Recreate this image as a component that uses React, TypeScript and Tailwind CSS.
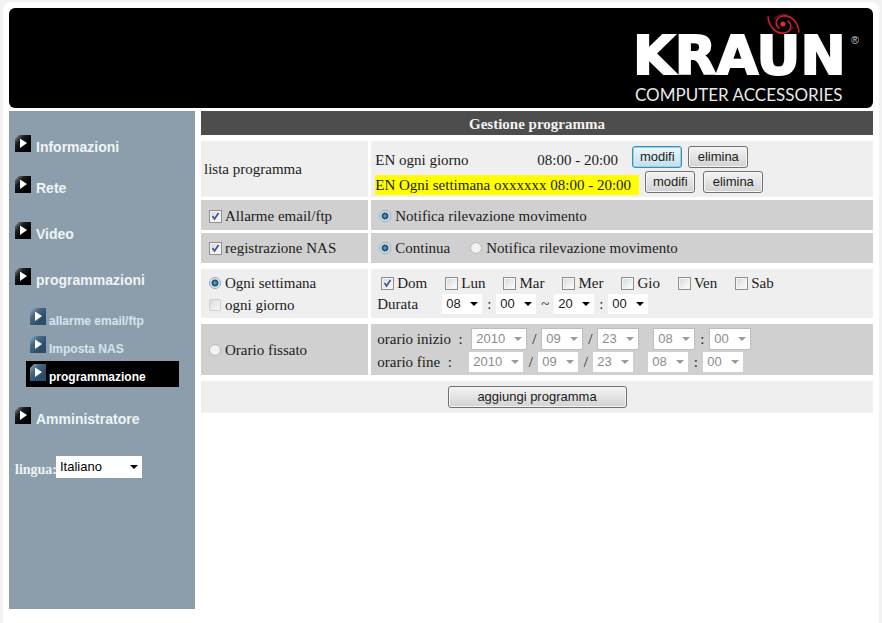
import { useState } from "react"
import type { ReactNode } from "react"
import clsx from "clsx"


const hours = Array.from({ length: 24 }, (_, i) => String(i).padStart(2, "0"))
const minutes = ["00", "10", "20", "30", "40", "50"]
const months = Array.from({ length: 12 }, (_, i) => String(i + 1).padStart(2, "0"))
const monthDays = Array.from({ length: 31 }, (_, i) => String(i + 1).padStart(2, "0"))
const years = ["2010", "2011", "2012"]
const weekDays = ["Dom", "Lun", "Mar", "Mer", "Gio", "Ven", "Sab"]

const ArrowIcon = ({ sub = false }: { sub?: boolean }) => (
    <svg viewBox="0 0 16 17" className="h-[17px] w-4 shrink-0" aria-hidden="true">
        <defs>
            <linearGradient id={sub ? "arrow-sub" : "arrow-main"} x1="0" y1="0" x2="0.7" y2="0.7">
                <stop offset="0" stopColor={sub ? "#9db2c2" : "#8d9aa5"} />
                <stop offset="0.45" stopColor={sub ? "#4a6a85" : "#1c1c1c"} />
                <stop offset="1" stopColor={sub ? "#2b4d6b" : "#000"} />
            </linearGradient>
        </defs>
        <path d="M4 0H16V17H0V4Z" fill={sub ? "url(#arrow-sub)" : "url(#arrow-main)"} />
        <path d="M5 3.5L12 8L5 13Z" fill="#fff" />
    </svg>
)

const Logo = () => (
    <svg viewBox="0 0 236 96" className="h-24 w-[236px] overflow-visible" role="img" aria-label="Kraun Computer Accessories">
        <text x="2" y="66" fill="#fff" stroke="#fff" strokeWidth="2" fontFamily="DejaVu Sans" fontWeight="700" fontSize="54">KRAUN</text>
        <text x="4" y="93" fill="#e8e8e8" fontFamily="Lato" fontSize="17">COMPUTER ACCESSORIES</text>
        <text x="220" y="36" fill="#ccc" fontFamily="Liberation Sans" fontSize="11">®</text>
        <g fill="none" stroke="#c8202c" strokeLinecap="round">
            <path d="M137 9C138 19 145 26 153 25C160 24 162 17 157 13" strokeWidth="1.6" />
            <path d="M168 24C167 14 160 7 152 8C145 9 143 16 148 20" strokeWidth="1.6" />
            <path d="M143 11C146 8 150 6 156 7" strokeWidth="0.8" />
            <path d="M162 19C161 22 157 25 151 25" strokeWidth="0.8" />
        </g>
        <circle cx="152" cy="16" r="2.5" fill="#e02a38" />
    </svg>
)

interface DropProps {
    label: string
    options: string[]
    value: string
    disabled?: boolean
    bordered?: boolean
    className?: string
}

const Drop = ({ label, options, value, disabled, bordered, className = "h-5 w-10" }: DropProps) => (
    <span className={clsx("relative inline-flex items-center", bordered && "border border-[#bdbdbd]")}>
        <select
            aria-label={label}
            defaultValue={value}
            disabled={disabled}
            className={clsx(
                "appearance-none bg-white pl-1 font-['Liberation_Sans',sans-serif] text-[13px] leading-5 disabled:text-[#8c8c8c] disabled:opacity-100",
                className,
            )}
        >
            {options.map((o) => <option key={o}>{o}</option>)}
        </select>
        <svg
            viewBox="0 0 8 4"
            className={clsx("pointer-events-none absolute right-1 h-1 w-2", disabled ? "fill-[#999]" : "fill-black")}
            aria-hidden="true"
        >
            <path d="M0 0H8L4 4Z" />
        </svg>
    </span>
)

interface TickProps {
    children: ReactNode
    defaultChecked?: boolean
    name?: string
}

const Check = ({ children, defaultChecked }: TickProps) => (
    <label className="flex w-fit items-center gap-[3px]">
        <span className="relative flex">
            <input
                type="checkbox"
                defaultChecked={defaultChecked}
                className="peer size-[13px] appearance-none border border-[#8e8f8f] bg-linear-to-br from-[#d5d8dc] to-white shadow-[inset_0_0_0_1px_#f4f4f4]"
            />
            <svg viewBox="0 0 13 13" className="pointer-events-none absolute inset-0 hidden size-[13px] peer-checked:block" aria-hidden="true">
                <path d="M3.5 6L5.5 9L9.5 3" fill="none" stroke="#4a5690" strokeWidth="1.8" />
            </svg>
        </span>
        {children}
    </label>
)

const Radio = ({ children, defaultChecked, name, square }: TickProps & { square?: boolean }) => (
    <label className="flex w-fit items-center gap-1">
        <input
            type="radio"
            name={name}
            defaultChecked={defaultChecked}
            className={clsx(
                "size-3 appearance-none border bg-[#f2f2f2] checked:border-[#8fa9b8] checked:bg-[radial-gradient(circle,#5fb4d8_0,#1c4a6b_3px,#dcecf4_4px)]",
                square ? "rounded-xs border-[#cfcfcf] bg-linear-to-br from-[#dcdcdc] to-[#f8f8f8]" : "rounded-full border-[#b4b8bb]",
            )}
        />
        {children}
    </label>
)

const Button = ({ children, active, className }: { children: ReactNode, active?: boolean, className?: string }) => (
    <button
        type="button"
        className={clsx(
            "h-[22px] rounded-[3px] border bg-linear-to-b font-['Liberation_Sans',sans-serif] text-[13px] leading-4",
            active
                ? "border-[#3c8fb0] from-[#eef6fa] to-[#c3dfec] shadow-[inset_0_0_0_1px_#8fd3ec]"
                : "border-[#707070] from-[#f4f4f4] to-[#d2d2d2] shadow-[inset_0_0_0_1px_#f6f6f6]",
            className,
        )}
    >
        {children}
    </button>
)

const Row = ({ left, children, dark, className }: { left: ReactNode, children: ReactNode, dark?: boolean, className?: string }) => (
    <div className={clsx("grid grid-cols-[1fr_3fr] gap-[3px]", className)}>
        <div className={clsx("flex flex-col justify-center", dark ? "bg-[#d0d0d0]" : "bg-[#efefef]")}>{left}</div>
        <div className={clsx("flex flex-col justify-center", dark ? "bg-[#d0d0d0]" : "bg-[#efefef]")}>{children}</div>
    </div>
)

const FixedTime = ({ label, bordered }: { label: string, bordered?: boolean }) => {

    const sep = clsx("text-center", bordered ? "w-3.5" : "w-[15px]")

    return (
        <div className="flex items-center">
            <span className={bordered ? "w-[94px]" : "w-[92px]"}>{label} &nbsp;:</span>
            <Drop label={`${label} anno`} options={years} value="2010" disabled bordered={bordered} className="h-5 w-[54px]" />
            <span className={sep}>/</span>
            <Drop label={`${label} mese`} options={months} value="09" disabled bordered={bordered} />
            <span className={sep}>/</span>
            <Drop label={`${label} giorno`} options={monthDays} value="23" disabled bordered={bordered} />
            <span className={sep} />
            <Drop label={`${label} ora`} options={hours} value="08" disabled bordered={bordered} />
            <span className={sep}>:</span>
            <Drop label={`${label} minuti`} options={minutes} value="00" disabled bordered={bordered} />
        </div>
    )
}

const MenuLink = ({ children }: { children: ReactNode }) => (
    <a href="#" className="flex items-end gap-[5px] text-sm leading-4 font-bold text-[#eef4f6]">
        <ArrowIcon />
        <span className="translate-y-[3px]">{children}</span>
    </a>
)

const SubLink = ({ children, active, onClick }: { children: ReactNode, active: boolean, onClick: () => void }) => (
    <a
        href="#"
        onClick={onClick}
        className={clsx(
            "flex h-[26px] items-start gap-[3px] pt-[3px] pl-1 text-xs leading-4 font-bold",
            active ? "bg-black text-white" : "text-[#d6e4ec]",
        )}
    >
        <ArrowIcon sub />
        <span className="pt-[5px]">{children}</span>
    </a>
)

const Sidebar = () => {

    const [current, setCurrent] = useState("programmazione")

    return (
        <nav className="w-[186px] shrink-0 bg-[#8c9eab] pt-6 pl-1.5 font-['Liberation_Sans',sans-serif]">
            <div className="flex flex-col gap-[29px]">
                <div className="flex flex-col gap-6">
                    <MenuLink>Informazioni</MenuLink>
                    <MenuLink>Rete</MenuLink>
                </div>
                <MenuLink>Video</MenuLink>
                <MenuLink>programmazioni</MenuLink>
            </div>
            <div className="mt-5 mr-4 mb-5 ml-[11px] flex flex-col gap-0.5">
                {["allarme email/ftp", "Imposta NAS", "programmazione"].map((item) => (
                    <SubLink key={item} active={item === current} onClick={() => setCurrent(item)}>{item}</SubLink>
                ))}
            </div>
            <MenuLink>Amministratore</MenuLink>
            <div className="mt-8 flex items-end font-['Liberation_Serif',serif] text-sm leading-4 font-bold text-[#eef4f6]">
                <span className="w-[41px]">lingua:</span>
                <span className="flex font-normal text-black">
                    <Drop label="lingua" options={["Italiano", "English"]} value="Italiano" className="h-[22px] w-[86px]" />
                </span>
            </div>
        </nav>
    )
}

const App = () => {
    return (
        <div className="flex min-h-screen flex-col bg-[#f2f2f2] px-[3px] pt-0.5 font-['Liberation_Serif',serif] text-[15px] leading-5 text-[#1c1c1c]">
            <div className="flex grow flex-col rounded-t-lg bg-white px-1.5 pt-1.5 pb-3.5">
                <header className="flex h-[100px] justify-end rounded-md bg-black pr-1.5">
                    <Logo />
                </header>

                <div className="mt-[3px] flex grow gap-1.5">
                    <Sidebar />

                    <main className="min-w-0 grow">
                        <h1 className="bg-[#4d4d4d] pt-[3px] pb-px text-center font-bold text-[#f2f2f2]">Gestione programma</h1>

                        <Row className="mt-1.5" left={<span className="pl-[3px]">lista programma</span>}>
                            <div className="flex flex-col gap-px pt-[5px] pb-0.5 pl-1">
                                <div className="flex items-start">
                                    <span className="mt-1 w-[162px]">EN ogni giorno</span>
                                    <span className="mt-1 w-[95px]">08:00 - 20:00</span>
                                    <Button active className="w-[50px]">modifi</Button>
                                    <Button className="ml-1.5 w-[60px]">elimina</Button>
                                </div>
                                <div className="flex items-start">
                                    <span className="mt-1 w-[264px] bg-[#ffff00]">EN Ogni settimana oxxxxxx 08:00 - 20:00</span>
                                    <Button className="ml-1.5 w-[50px]">modifi</Button>
                                    <Button className="ml-2 w-[60px]">elimina</Button>
                                </div>
                            </div>
                        </Row>

                        <Row dark className="mt-[3px]" left={<div className="pt-1.5 pb-1 pl-2"><Check defaultChecked>Allarme email/ftp</Check></div>}>
                            <div className="pt-1.5 pb-1 pl-2">
                                <Radio name="allarme" defaultChecked>Notifica rilevazione movimento</Radio>
                            </div>
                        </Row>

                        <Row dark className="mt-[3px]" left={<div className="py-[5px] pl-2"><Check defaultChecked>registrazione NAS</Check></div>}>
                            <div className="flex gap-5 py-[5px] pl-2">
                                <Radio name="nas" defaultChecked>Continua</Radio>
                                <Radio name="nas">Notifica rilevazione movimento</Radio>
                            </div>
                        </Row>

                        <Row
                            className="mt-1.5"
                            left={
                                <div className="flex flex-col gap-0.5 pl-2">
                                    <Radio name="tipo" defaultChecked>Ogni settimana</Radio>
                                    <Radio name="tipo" square>ogni giorno</Radio>
                                </div>
                            }
                        >
                            <div className="flex flex-col gap-px py-1 pl-1.5">
                                <div className="flex gap-[18px] pl-1">
                                    {weekDays.map((day) => (
                                        <Check key={day} defaultChecked={day === "Dom"}>{day}</Check>
                                    ))}
                                </div>
                                <div className="flex items-center">
                                    <span className="w-[65px]">Durata</span>
                                    <Drop label="ora inizio" options={hours} value="08" />
                                    <span className="w-3.5 text-center">:</span>
                                    <Drop label="minuti inizio" options={minutes} value="00" />
                                    <span className="w-[18px] text-center">~</span>
                                    <Drop label="ora fine" options={hours} value="20" />
                                    <span className="w-3.5 text-center">:</span>
                                    <Drop label="minuti fine" options={minutes} value="00" />
                                </div>
                            </div>
                        </Row>

                        <Row dark className="mt-1.5" left={<div className="pl-2"><Radio name="tipo">Orario fissato</Radio></div>}>
                            <div className="flex flex-col gap-0.5 pt-1 pb-[3px] pl-1.5">
                                <FixedTime label="orario inizio" bordered />
                                <FixedTime label="orario fine" />
                            </div>
                        </Row>

                        <div className="mt-1.5 flex justify-center bg-[#efefef] py-[5px]">
                            <Button className="w-[179px]">aggiungi programma</Button>
                        </div>
                    </main>
                </div>
            </div>
        </div>
    )
}

export default App
